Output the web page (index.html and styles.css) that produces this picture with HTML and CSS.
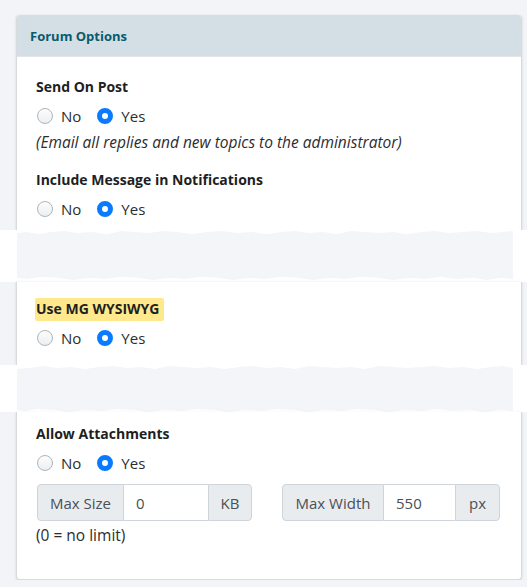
FILE: index.html
```html
<!DOCTYPE html>
<html lang="en">
<head>
<meta charset="utf-8">
<title>Forum Options</title>
<link rel="stylesheet" href="styles.css">
</head>
<body>
<div class="page">
  <section class="card-seg seg-top">
    <header class="card-header">Forum Options</header>
    <div class="card-body body-1">
      <div class="field">
        <div class="label">Send On Post</div>
        <div class="radios">
          <span class="opt"><span class="radio"></span>No</span>
          <span class="opt"><span class="radio checked"></span>Yes</span>
        </div>
        <div class="help">(Email all replies and new topics to the administrator)</div>
      </div>
      <div class="field field-2">
        <div class="label">Include Message in Notifications</div>
        <div class="radios">
          <span class="opt"><span class="radio"></span>No</span>
          <span class="opt"><span class="radio checked"></span>Yes</span>
        </div>
      </div>
    </div>
  </section>

  <div class="tear">
    <svg class="tear-shape" viewBox="0 0 496 50" preserveAspectRatio="none" aria-hidden="true">
      <path d="M0 3 L10 2 L22 4 L34 2 L48 1 L60 3 L75 2 L90 4 L104 1 L118 2 L132 3 L146 1 L160 2 L175 4 L190 2 L205 1 L220 3 L236 2 L250 4 L264 2 L278 1 L292 3 L306 2 L320 4 L334 1 L348 2 L362 3 L376 2 L390 4 L404 2 L418 1 L432 3 L446 2 L460 1 L474 3 L486 2 L496 1 L496 47 L484 46 L470 48 L456 46 L440 47 L424 45 L408 47 L392 46 L376 48 L360 46 L344 45 L328 47 L312 46 L296 48 L280 46 L264 45 L248 47 L232 46 L216 48 L200 46 L184 45 L168 47 L152 46 L136 48 L120 46 L104 45 L88 47 L72 46 L56 48 L40 46 L24 45 L10 47 L0 46 Z" fill="#f4f5f9"/>
    </svg>
  </div>

  <section class="card-seg seg-mid">
    <div class="card-body body-2">
      <div class="field">
        <div class="label"><span class="mark">Use MG WYSIWYG</span></div>
        <div class="radios">
          <span class="opt"><span class="radio"></span>No</span>
          <span class="opt"><span class="radio checked"></span>Yes</span>
        </div>
      </div>
    </div>
  </section>

  <div class="tear tear-2">
    <svg class="tear-shape" viewBox="0 0 496 47" preserveAspectRatio="none" aria-hidden="true">
      <path d="M0 4 L12 3 L26 1 L40 3 L54 2 L68 4 L82 2 L96 1 L110 3 L124 2 L138 4 L152 1 L166 2 L180 3 L194 2 L208 4 L222 2 L236 1 L250 3 L264 2 L278 4 L292 1 L306 2 L320 3 L334 2 L348 4 L362 1 L376 2 L390 3 L404 2 L418 1 L432 3 L446 2 L460 4 L474 2 L486 1 L496 3 L496 46 L482 45 L468 47 L452 45 L436 46 L420 44 L404 46 L388 45 L372 47 L356 45 L340 44 L324 46 L308 45 L292 47 L276 45 L260 44 L244 46 L228 45 L212 47 L196 45 L180 44 L164 46 L148 45 L132 47 L116 45 L100 44 L84 46 L68 45 L52 47 L36 45 L20 44 L8 46 L0 45 Z" fill="#f4f5f9"/>
    </svg>
  </div>

  <section class="card-seg seg-bot">
    <div class="card-body body-3">
      <div class="field">
        <div class="label">Allow Attachments</div>
        <div class="radios">
          <span class="opt"><span class="radio"></span>No</span>
          <span class="opt"><span class="radio checked"></span>Yes</span>
        </div>
        <div class="groups">
          <div class="input-group group-size">
            <span class="addon">Max Size</span>
            <span class="input">0</span>
            <span class="addon">KB</span>
          </div>
          <div class="input-group group-width">
            <span class="addon">Max Width</span>
            <span class="input">550</span>
            <span class="addon">px</span>
          </div>
        </div>
        <div class="note">(0 = no limit)</div>
      </div>
    </div>
  </section>
</div>
</body>
</html>
```

FILE: styles.css
```css
* { box-sizing: border-box; }

html, body {
  margin: 0;
  padding: 0;
  background: #f3f4f7;
}

body {
  font-family: "Open Sans", "Noto Sans", sans-serif;
  color: #212529;
  font-size: 15px;
}

.page {
  padding-top: 15px;
  display: flex;
  flex-direction: column;
}

.card-seg {
  margin: 0 5px 0 16px;
  background: #fff;
  border-left: 1px solid #d9dadd;
  border-right: 1px solid #d9dadd;
  box-shadow: 1px 0 2px rgba(0, 0, 0, 0.06), -1px 0 2px rgba(0, 0, 0, 0.06);
}

.seg-top {
  border-radius: 4px 4px 0 0;
  height: 215px;
  overflow: hidden;
}

.seg-mid {
  height: 83px;
  overflow: hidden;
}

.seg-bot {
  border-bottom: 1px solid #d9dadd;
  border-radius: 0 0 4px 4px;
  box-shadow: 0 1px 3px rgba(0, 0, 0, 0.12);
  height: 168px;
}

.card-header {
  background: #d3dfe4;
  color: #0b5a6e;
  font-weight: 700;
  font-size: 13px;
  height: 42px;
  line-height: 42px;
  padding-left: 14px;
  margin: 0 -1px;
  border-bottom: 1px solid #e2e6e9;
}

.card-body {
  padding-left: 19px;
  padding-right: 16px;
}

.body-1 { padding-top: 20px; }
.body-2 { padding-top: 17px; }
.body-3 { padding-top: 12px; }

.label {
  font-weight: 700;
  font-size: 14px;
  line-height: 20px;
  height: 20px;
  color: #1d1f22;
}

.mark {
  display: inline-block;
  background: #ffe98c;
  padding: 1px 5px 2px 1px;
  margin: -1px 0 0 -1px;
  line-height: 20px;
  border-radius: 2px;
  vertical-align: top;
}

.field-2 { margin-top: 18px; }

.radios {
  display: flex;
  align-items: center;
  margin-top: 9px;
  height: 20px;
  font-size: 15px;
  color: #2b2d31;
}

.opt {
  display: inline-flex;
  align-items: center;
  margin-right: 15px;
}

.radio {
  width: 16px;
  height: 16px;
  border-radius: 50%;
  border: 1px solid #adb5bd;
  background: linear-gradient(#fdfdfd, #eceef0);
  margin-left: 1px;
  margin-right: 8px;
  flex: none;
}

.radio.checked {
  border: 5px solid #0a7bff;
  background: #fff;
}

.help {
  margin-top: 6px;
  font-style: italic;
  font-size: 15.5px;
  line-height: 20px;
  color: #2b2d31;
  white-space: nowrap;
}

.groups {
  display: flex;
  gap: 30px;
  margin-top: 11px;
  margin-left: 1px;
}

.input-group {
  display: flex;
  height: 37px;
  font-size: 15px;
  color: #495057;
  white-space: nowrap;
}

.addon {
  display: flex;
  align-items: center;
  justify-content: center;
  background: #e9ecef;
  border: 1px solid #ced4da;
  padding: 0;
}

.addon:first-child {
  border-radius: 4px 0 0 4px;
}

.addon:last-child {
  border-radius: 0 4px 4px 0;
}

.input {
  display: flex;
  align-items: center;
  background: #fff;
  border-top: 1px solid #ced4da;
  border-bottom: 1px solid #ced4da;
  padding: 0 12px;
}

.group-size .addon:first-child { width: 87px; }
.group-size .input { width: 84px; }
.group-size .addon:last-child { width: 44px; }

.group-width .addon:first-child { width: 102px; }
.group-width .input { width: 71px; }
.group-width .addon:last-child { width: 45px; }

.note {
  margin-top: 4px;
  font-size: 15.5px;
  line-height: 20px;
  color: #2b2d31;
}

.tear {
  background: #fff;
  height: 52px;
  padding: 0 14px 0 17px;
}

.tear-2 {
  height: 47px;
}

.tear-shape {
  display: block;
  width: 100%;
  height: 100%;
}
```
